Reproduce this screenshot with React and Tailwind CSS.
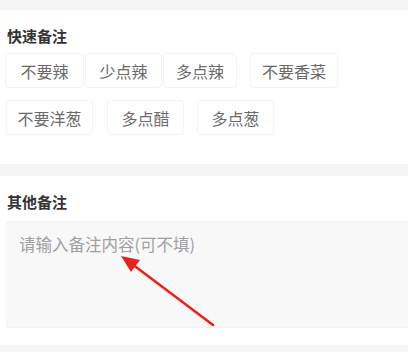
import React from "react";

const rows = [
  [
    { t: "不要辣", ml: "ml-[5px]", w: "w-[79px]" },
    { t: "少点辣", ml: "ml-[1px]", w: "w-[77px]" },
    { t: "多点辣", ml: "ml-[1px]", w: "w-[74px]" },
    { t: "不要香菜", ml: "ml-[13px]", w: "w-[88px]" },
  ],
  [
    { t: "不要洋葱", ml: "ml-[6px]", w: "w-[87px]" },
    { t: "多点醋", ml: "ml-[14px]", w: "w-[77px]" },
    { t: "多点葱", ml: "ml-[13px]", w: "w-[77px]" },
  ],
];

export default function App() {
  return (
    <div
      className="relative w-[408px] h-[352px] overflow-hidden bg-[#f5f5f5]"
      style={{ fontFamily: '"Noto Sans CJK SC", "Noto Sans", sans-serif' }}
    >
      <div className="h-[10px]" />

      {/* Quick notes */}
      <div className="bg-white h-[154px] pt-[17px]">
        <h2 className="pl-[7px] text-[15px] leading-[18px] font-bold text-[#333]">
          快速备注
        </h2>
        <div className="mt-[8px] flex flex-col gap-[12px]">
          {rows.map((row, i) => (
            <div key={i} className="flex">
              {row.map((c) => (
                <div
                  key={c.t}
                  className={`${c.ml} ${c.w} h-[35px] flex items-center justify-center rounded-[4px] border border-[#f4f4f4] text-[16px] text-[#6a6a6a]`}
                >
                  {c.t}
                </div>
              ))}
            </div>
          ))}
        </div>
      </div>

      <div className="h-[12px]" />

      {/* Other notes */}
      <div className="bg-white h-[169px] pt-[17px]">
        <h2 className="pl-[7px] text-[15px] leading-[18px] font-bold text-[#333]">
          其他备注
        </h2>
        <div className="mt-[10px] ml-[6px] h-[107px] rounded-l-[4px] border border-r-0 border-[#f3f3f3] bg-[#f8f8f8] px-[12px] pt-[11px]">
          <p className="text-[16.5px] leading-[22px] text-[#a0a0a0]">
            请输入备注内容(可不填)
          </p>
        </div>
      </div>

      {/* red arrow annotation */}
      <svg
        className="absolute left-0 top-0 pointer-events-none"
        width="408"
        height="352"
        viewBox="0 0 408 352"
      >
        <line
          x1="213"
          y1="325"
          x2="132"
          y2="264"
          stroke="#e8221f"
          strokeWidth="2.6"
          strokeLinecap="round"
        />
        <polygon points="121,256 140,260 131,272" fill="#e8221f" />
      </svg>
    </div>
  );
}
